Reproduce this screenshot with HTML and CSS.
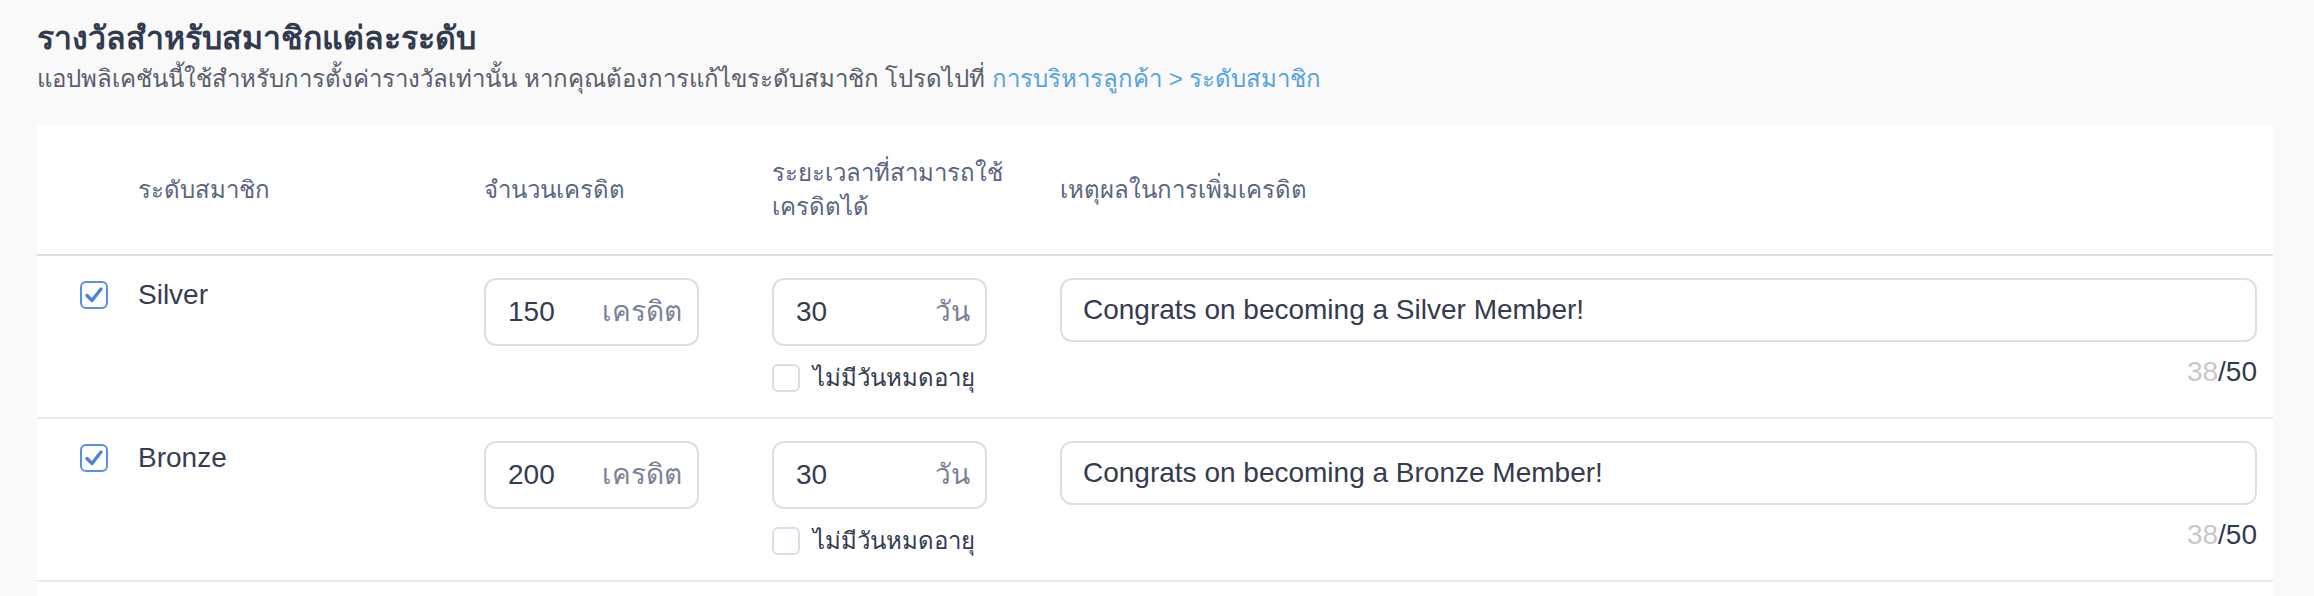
FILE: index.html
```html
<!DOCTYPE html>
<html lang="th">
<head>
<meta charset="utf-8">
<title>รางวัลสำหรับสมาชิกแต่ละระดับ</title>
<link rel="stylesheet" href="styles.css">
</head>
<body>
<div class="page">
  <h1 class="title">รางวัลสำหรับสมาชิกแต่ละระดับ</h1>
  <p class="subtitle">แอปพลิเคชันนี้ใช้สำหรับการตั้งค่ารางวัลเท่านั้น หากคุณต้องการแก้ไขระดับสมาชิก โปรดไปที่ <a class="link" href="#">การบริหารลูกค้า &gt; ระดับสมาชิก</a></p>

  <div class="card">
    <div class="grid head">
      <div class="cell"></div>
      <div class="cell">ระดับสมาชิก</div>
      <div class="cell">จำนวนเครดิต</div>
      <div class="cell">ระยะเวลาที่สามารถใช้<br>เครดิตได้</div>
      <div class="cell">เหตุผลในการเพิ่มเครดิต</div>
    </div>

    <div class="grid row">
      <div class="cell"><span class="check on"><svg viewBox="0 0 24 24" width="24" height="24"><path d="M5 12.5 L10 17.5 L19 6" fill="none" stroke="#4b82e2" stroke-width="3.4" stroke-linecap="round" stroke-linejoin="round"/></svg></span></div>
      <div class="cell name">Silver</div>
      <div class="cell">
        <div class="field"><span class="value">150</span><span class="suffix">เครดิต</span></div>
      </div>
      <div class="cell">
        <div class="field"><span class="value">30</span><span class="suffix">วัน</span></div>
        <label class="opt"><span class="check"></span><span>ไม่มีวันหมดอายุ</span></label>
      </div>
      <div class="cell">
        <div class="text-field">Congrats on becoming a Silver Member!</div>
        <div class="counter"><span class="used">38</span>/50</div>
      </div>
    </div>

    <div class="grid row">
      <div class="cell"><span class="check on"><svg viewBox="0 0 24 24" width="24" height="24"><path d="M5 12.5 L10 17.5 L19 6" fill="none" stroke="#4b82e2" stroke-width="3.4" stroke-linecap="round" stroke-linejoin="round"/></svg></span></div>
      <div class="cell name">Bronze</div>
      <div class="cell">
        <div class="field"><span class="value">200</span><span class="suffix">เครดิต</span></div>
      </div>
      <div class="cell">
        <div class="field"><span class="value">30</span><span class="suffix">วัน</span></div>
        <label class="opt"><span class="check"></span><span>ไม่มีวันหมดอายุ</span></label>
      </div>
      <div class="cell">
        <div class="text-field">Congrats on becoming a Bronze Member!</div>
        <div class="counter"><span class="used">38</span>/50</div>
      </div>
    </div>
  </div>
</div>
</body>
</html>
```

FILE: styles.css
```css
* { box-sizing: border-box; }

html, body {
  margin: 0;
  background: #f9f9f9;
}

body {
  font-family: "Liberation Sans", Arial, sans-serif;
  font-size: 28px;
  color: #353c4f;
}

.page {
  padding: 18px 41px 0 37px;
}

.title {
  margin: 0;
  font-size: 32px;
  line-height: 40px;
  font-weight: 700;
  color: #323a4e;
}

.subtitle {
  margin: 1px 0 0;
  font-size: 24px;
  line-height: 40px;
  color: #585e6b;
}

.link {
  color: #55a3e0;
  text-decoration: none;
}

.card {
  margin-top: 26px;
  background: #ffffff;
  min-height: 480px;
}

.grid {
  display: grid;
  grid-template-columns: 58px 346px 288px 288px 1fr;
  padding: 0 16px 0 43px;
}

.head {
  height: 131px;
  align-items: center;
  border-bottom: 2px solid #d6dee8;
  color: #5a6582;
  font-size: 24px;
  line-height: 34px;
}

.row {
  padding-top: 22px;
  padding-bottom: 25px;
  border-bottom: 2px solid #e7eaef;
  line-height: 34px;
}

.name {
  color: #363d50;
}

.check {
  display: flex;
  align-items: center;
  justify-content: center;
  width: 28px;
  height: 28px;
  border: 2px solid #d8dee7;
  border-radius: 6px;
  background: #fff;
  flex: none;
}

.row > .cell > .check {
  margin-top: 3px;
}

.check.on {
  border-color: #5a8fe6;
}

.field {
  display: flex;
  align-items: center;
  justify-content: space-between;
  width: 215px;
  height: 68px;
  padding: 0 15px 0 22px;
  border: 2px solid #d9e0ea;
  border-radius: 12px;
}

.value {
  color: #353c4f;
}

.suffix {
  color: #7b8296;
}

.opt {
  display: flex;
  align-items: center;
  gap: 13px;
  margin-top: 18px;
  font-size: 24px;
  line-height: 28px;
  color: #353c4f;
}

.text-field {
  height: 64px;
  display: flex;
  align-items: center;
  padding: 0 21px;
  border: 2px solid #d9e0ea;
  border-radius: 12px;
  color: #343b4e;
}

.counter {
  margin-top: 13px;
  text-align: right;
  color: #333a4d;
}

.used {
  color: #c7c8cc;
}
```
